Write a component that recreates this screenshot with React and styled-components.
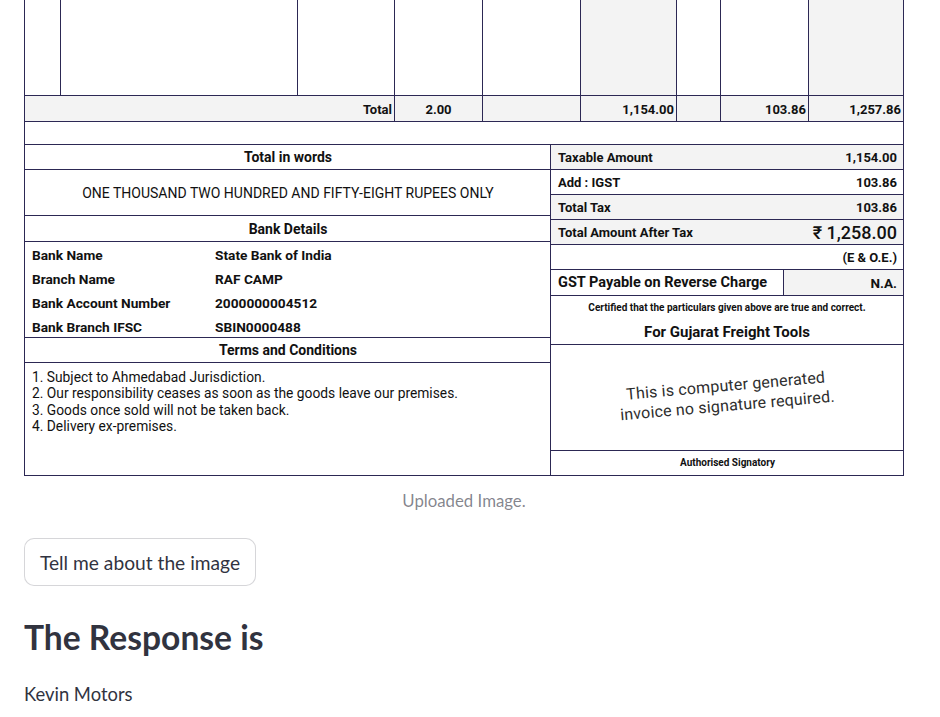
import React from "react";
import styled, { createGlobalStyle } from "styled-components";

const LINE = "#2c2854";
const FILL = "#f3f3f3";

const Global = createGlobalStyle`
  html, body { margin: 0; padding: 0; background: #ffffff; }
  body { font-family: "Lato", "Liberation Sans", sans-serif; color: #31333f; }
  * { box-sizing: border-box; }
`;

const Page = styled.main`
  width: 940px;
  padding: 0 36px 0 24px;
`;

const Invoice = styled.figure`
  margin: 0;
  width: 880px;
  font-family: "Roboto", "Liberation Sans", sans-serif;
  color: #111111;
`;

const ItemsGrid = styled.div`
  display: grid;
  grid-template-columns: 36px 237px 97px 88px 98px 96px 44px 88px 95px;
  border-left: 1px solid ${LINE};
`;

const Cell = styled.div`
  height: ${(p) => p.$h}px;
  grid-column: span ${(p) => p.$span || 1};
  border-right: 1px solid ${LINE};
  border-bottom: 1px solid ${LINE};
  background: ${(p) => (p.$fill ? FILL : "#ffffff")};
  display: flex;
  align-items: center;
  justify-content: ${(p) => p.$align || "flex-end"};
  padding: 2px 2px 0;
  font-size: 13px;
  font-weight: 700;
`;

const Spacer = styled.div`
  height: 23px;
  border: 1px solid ${LINE};
  border-top: none;
`;

const Bottom = styled.div`
  display: grid;
  grid-template-columns: 526px 353px;
  border-left: 1px solid ${LINE};
`;

const Column = styled.div`
  display: flex;
  flex-direction: column;
  border-right: 1px solid ${LINE};
`;

const Row = styled.div`
  height: ${(p) => p.$h}px;
  flex: none;
  border-bottom: 1px solid ${LINE};
  background: ${(p) => (p.$fill ? FILL : "#ffffff")};
  display: flex;
  align-items: center;
  justify-content: ${(p) => p.$justify || "space-between"};
  padding: 0 6px 0 7px;
  font-size: ${(p) => p.$size || 13}px;
  font-weight: ${(p) => p.$weight || 700};
`;

const SplitRow = styled.div`
  height: 26px;
  flex: none;
  display: grid;
  grid-template-columns: 233px 1fr;
  border-bottom: 1px solid ${LINE};
  font-weight: 700;
`;

const SplitCell = styled.div`
  display: flex;
  align-items: center;
  justify-content: ${(p) => p.$justify || "flex-start"};
  padding: 0 6px 0 7px;
  background: ${(p) => (p.$fill ? FILL : "#ffffff")};
  border-right: ${(p) => (p.$divider ? `1px solid ${LINE}` : "none")};
  font-size: ${(p) => p.$size || 14.5}px;
`;

const BankInfo = styled.div`
  height: 96px;
  flex: none;
  border-bottom: 1px solid ${LINE};
  display: grid;
  grid-template-columns: 183px 1fr;
  grid-auto-rows: 24px;
  padding: 1px 7px 0;
  font-size: 13.7px;
  font-weight: 700;
  align-items: center;
`;

const Terms = styled.ol`
  margin: 0;
  height: 113px;
  flex: none;
  list-style: none;
  padding: 6px 7px 0;
  border-bottom: 1px solid ${LINE};
  font-size: 13.8px;
  line-height: 16.3px;
`;

const Certified = styled.div`
  height: 49px;
  flex: none;
  border-bottom: 1px solid ${LINE};
  display: flex;
  flex-direction: column;
  align-items: center;
  padding-top: 6px;
`;

const Small = styled.div`
  font-size: 10px;
  font-weight: 700;
  line-height: 12px;
`;

const ForCompany = styled.div`
  margin-top: 9px;
  font-size: 15px;
  font-weight: 700;
  line-height: 18px;
`;

const SignBox = styled.div`
  height: 106px;
  flex: none;
  border-bottom: 1px solid ${LINE};
  display: flex;
  align-items: center;
  justify-content: center;
`;

const Stamp = styled.div`
  transform: rotate(-5deg);
  text-align: center;
  font-size: 16px;
  line-height: 20px;
  color: #2e2e2e;
  letter-spacing: 0.2px;
  margin-top: -4px;
`;

const BigAmount = styled.span`
  font-size: 18px;
  font-weight: 500;
`;

const Caption = styled.figcaption`
  margin-top: 11px;
  text-align: center;
  font-family: "Lato", "Liberation Sans", sans-serif;
  font-size: 16.8px;
  line-height: 27px;
  color: rgba(49, 51, 63, 0.6);
`;

const Button = styled.button`
  margin-top: 24px;
  display: inline-flex;
  align-items: center;
  justify-content: center;
  width: 232px;
  height: 48px;
  padding: 0 6px;
  border: 1px solid rgba(49, 51, 63, 0.2);
  border-radius: 10px;
  background: #ffffff;
  font-family: "Lato", "Liberation Sans", sans-serif;
  font-size: 19.2px;
  white-space: nowrap;
  color: #31333f;
`;

const Heading = styled.h3`
  margin: 31px 0 0;
  font-size: 33.6px;
  line-height: 40px;
  font-weight: 700;
  color: #31333f;
`;

const Text = styled.p`
  margin: 22px 0 0;
  font-size: 18.4px;
  line-height: 31px;
  color: #31333f;
`;

const itemFill = [false, false, false, false, false, true, false, false, true];

export default function App() {
  return (
    <Page>
      <Global />
      <Invoice>
        <ItemsGrid>
          {itemFill.map((f, i) => (
            <Cell key={i} $h={96} $fill={f} />
          ))}
          <Cell $h={26} $span={3} $fill>Total</Cell>
          <Cell $h={26} $fill $align="center">2.00</Cell>
          <Cell $h={26} $fill />
          <Cell $h={26} $fill>1,154.00</Cell>
          <Cell $h={26} $fill />
          <Cell $h={26} $fill>103.86</Cell>
          <Cell $h={26} $fill>1,257.86</Cell>
        </ItemsGrid>
        <Spacer />
        <Bottom>
          <Column>
            <Row $h={25} $justify="center" $size={14}>Total in words</Row>
            <Row $h={46} $justify="center" $weight={400} $size={14}>
              ONE THOUSAND TWO HUNDRED AND FIFTY-EIGHT RUPEES ONLY
            </Row>
            <Row $h={26} $justify="center" $size={14}>Bank Details</Row>
            <BankInfo>
              <span>Bank Name</span>
              <span>State Bank of India</span>
              <span>Branch Name</span>
              <span>RAF CAMP</span>
              <span>Bank Account Number</span>
              <span>2000000004512</span>
              <span>Bank Branch IFSC</span>
              <span>SBIN0000488</span>
            </BankInfo>
            <Row $h={25} $justify="center" $size={14}>Terms and Conditions</Row>
            <Terms>
              <li>1. Subject to Ahmedabad Jurisdiction.</li>
              <li>2. Our responsibility ceases as soon as the goods leave our premises.</li>
              <li>3. Goods once sold will not be taken back.</li>
              <li>4. Delivery ex-premises.</li>
            </Terms>
          </Column>
          <Column>
            <Row $h={25} $fill>
              <span>Taxable Amount</span>
              <span>1,154.00</span>
            </Row>
            <Row $h={25}>
              <span>Add : IGST</span>
              <span>103.86</span>
            </Row>
            <Row $h={25} $fill>
              <span>Total Tax</span>
              <span>103.86</span>
            </Row>
            <Row $h={25} $fill>
              <span>Total Amount After Tax</span>
              <BigAmount>₹ 1,258.00</BigAmount>
            </Row>
            <Row $h={25} $justify="flex-end">(E &amp; O.E.)</Row>
            <SplitRow>
              <SplitCell $divider>GST Payable on Reverse Charge</SplitCell>
              <SplitCell $fill $justify="flex-end" $size={13.5}>N.A.</SplitCell>
            </SplitRow>
            <Certified>
              <Small>Certified that the particulars given above are true and correct.</Small>
              <ForCompany>For Gujarat Freight Tools</ForCompany>
            </Certified>
            <SignBox>
              <Stamp>
                This is computer generated
                <br />
                invoice no signature required.
              </Stamp>
            </SignBox>
            <Row $h={25} $justify="center">
              <Small>Authorised Signatory</Small>
            </Row>
          </Column>
        </Bottom>
        <Caption>Uploaded Image.</Caption>
      </Invoice>
      <Button type="button">Tell me about the image</Button>
      <Heading>The Response is</Heading>
      <Text>Kevin Motors</Text>
    </Page>
  );
}
